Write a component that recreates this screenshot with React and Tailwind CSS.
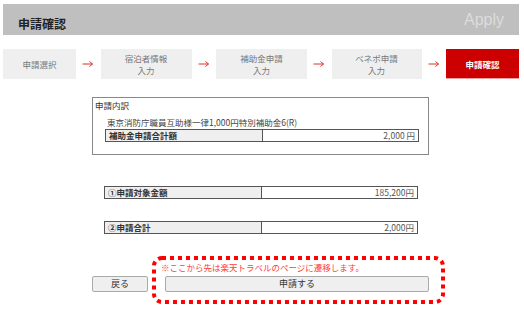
import React from "react";

const Arrow = () => (
  <svg width="12" height="8" viewBox="0 0 12 8" className="shrink-0">
    <line x1="0.5" y1="4" x2="10.5" y2="4" stroke="#d9352b" strokeWidth="1" />
    <polyline points="7.5,1.5 10.5,4 7.5,6.5" fill="none" stroke="#d9352b" strokeWidth="1" />
  </svg>
);

const Step = ({ w, children, active }) => (
  <div
    className={`flex h-[30px] shrink-0 flex-col items-center justify-center text-center leading-[12px] ${
      active
        ? "bg-[#cc0000] font-bold text-white border-b border-[#f0a0a0]"
        : "bg-[#efefef] text-[#777]"
    } ${w}`}
  >
    {children}
  </div>
);

const Row = ({ label, value, className = "" }) => (
  <div className={`flex h-[13px] border border-[#555] ${className}`}>
    <div className="flex w-[157px] items-center border-r border-[#555] bg-[#efefef] pl-[3px] font-bold text-[#333]">
      {label}
    </div>
    <div className="flex flex-1 items-center justify-end pr-[3px] text-[#555]">{value}</div>
  </div>
);

export default function App() {
  return (
    <div
      className="relative h-[317px] w-[524px] overflow-hidden bg-white text-[8.5px] text-[#333]"
      style={{ fontFamily: '"Noto Sans CJK JP", "Noto Sans", sans-serif' }}
    >
      {/* header */}
      <div className="ml-[3px] mt-[4px] flex h-[31px] w-[516px] justify-between bg-[#bfbfbf] px-[15px]">
        <div className="self-end pb-[3px] text-[12px] font-bold leading-[16px] text-[#222]">申請確認</div>
        <div
          className="self-center pt-[1px] text-[16px] leading-[18px] text-[#dcdcdc]"
          style={{ fontFamily: '"Liberation Sans", Arial, sans-serif' }}
        >
          Apply
        </div>
      </div>

      {/* steps */}
      <div className="ml-[3px] mt-[14px] flex w-[516px] items-center justify-between">
        <Step w="w-[73px]">申請選択</Step>
        <Arrow />
        <Step w="w-[91px]">
          <span>宿泊者情報</span>
          <span>入力</span>
        </Step>
        <Arrow />
        <Step w="w-[91px]">
          <span>補助金申請</span>
          <span>入力</span>
        </Step>
        <Arrow />
        <Step w="w-[90px]">
          <span>ベネポ申請</span>
          <span>入力</span>
        </Step>
        <Arrow />
        <Step w="w-[73px]" active>
          申請確認
        </Step>
      </div>

      {/* summary */}
      <div className="ml-[92px] mt-[18px] h-[58px] w-[337px] border border-[#888]">
        <div className="pl-[2px] pt-[1px] leading-[12px]">申請内訳</div>
        <div className="mt-[5px] pl-[14px] leading-[12px] text-[#444]">
          東京消防庁職員互助様一律1,000円特別補助金6(R)
        </div>
        <Row className="ml-[12px] mt-[1px] w-[314px]" label="補助金申請合計額" value="2,000 円" />
      </div>

      <Row className="ml-[104px] mt-[31px] w-[314px]" label="①申請対象金額" value="185,200円" />
      <Row className="ml-[104px] mt-[22px] w-[314px]" label="②申請合計" value="2,000円" />

      {/* actions */}
      <div className="ml-[92px] mt-[22px] flex items-start gap-[4px]">
        <button className="mt-[20px] h-[16px] w-[56px] rounded-[2px] border border-[#aaa] bg-[#efefef] text-[9px] leading-[14px] text-[#333]">
          戻る
        </button>
        <div className="relative h-[48px] w-[293px] pl-[13px] pr-[16px] pt-[4px]">
          <svg
            className="pointer-events-none absolute inset-0"
            width="293"
            height="48"
            viewBox="0 0 293 48"
          >
            <rect
              x="2"
              y="2"
              width="289"
              height="44"
              rx="8"
              fill="none"
              stroke="#ff0000"
              strokeWidth="4"
              strokeDasharray="4 4"
            />
          </svg>
          <div className="-ml-[4px] pt-[2px] text-[8.5px] leading-[11px] text-[#ff3b3b]">
            ※ここから先は楽天トラベルのページに遷移します。
          </div>
          <button className="mt-[3px] h-[16px] w-full rounded-[2px] border border-[#aaa] bg-[#efefef] text-[9px] leading-[14px] text-[#333]">
            申請する
          </button>
        </div>
      </div>
    </div>
  );
}
